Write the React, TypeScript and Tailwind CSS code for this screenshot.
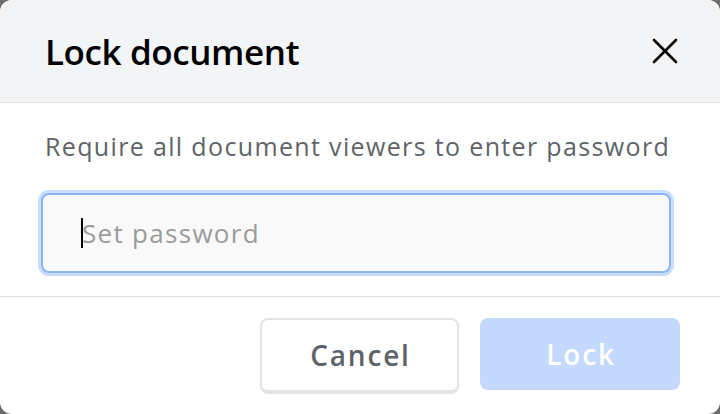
import React from "react"

const XIcon = () => (
  <svg width="26" height="26" viewBox="0 0 26 26" fill="none">
    <path d="M2 2 L24 24 M24 2 L2 24" stroke="#000" strokeWidth="2.6" strokeLinecap="round" />
  </svg>
)

const App: React.FC = () => {
  return (
    <div
      className="w-[720px] h-[414px] bg-[#6b6b6b]"
      style={{ fontFamily: "'Open Sans', 'Noto Sans', sans-serif" }}
    >
      <div className="flex h-full w-full flex-col overflow-hidden rounded-[12px] bg-white">
        {/* header */}
        <div className="flex h-[103px] shrink-0 items-center justify-between border-b border-[#e3e3e3] bg-[#f3f4f6] pl-[45px] pr-[39px]">
          <h1 className="text-[35px] font-semibold leading-none tracking-[-0.4px] text-black">
            Lock document
          </h1>
          <button className="flex h-[32px] w-[32px] items-center justify-center">
            <XIcon />
          </button>
        </div>

        {/* body */}
        <div className="flex flex-col border-b border-[#e3e3e3] pb-[23px] pt-[27px]">
          <p className="pl-[45px] text-[25px] leading-[32px] tracking-[1.35px] text-[#5f6368]">
            Require all document viewers to enter password
          </p>
          <div className="ml-[41px] mt-[31px] flex h-[80px] w-[630px] items-center rounded-[8px] border-2 border-[#8ab4f8] bg-[#f9f9f9] pl-[38px] shadow-[0_0_0_3px_#c8dcfc]">
            <span className="h-[30px] w-[2px] bg-black" />
            <span className="-ml-[1px] text-[26px] leading-none tracking-[1.3px] text-[#9b9b9b]">
              Set password
            </span>
          </div>
        </div>

        {/* footer */}
        <div className="flex justify-end gap-[21px] pr-[40px] pt-[21px]">
          <button className="flex h-[76px] w-[199px] items-center justify-center rounded-[8px] border-2 border-b-4 border-[#e4e4e4] bg-white pl-[2px] text-[28px] font-semibold tracking-[1.8px] text-[#5f6368]">
            Cancel
          </button>
          <button className="flex h-[72px] w-[200px] items-center justify-center rounded-[8px] bg-[#c4d9fd] pl-[2px] text-[28px] font-semibold tracking-[1.8px] text-white">
            Lock
          </button>
        </div>
      </div>
    </div>
  )
}

export default App
